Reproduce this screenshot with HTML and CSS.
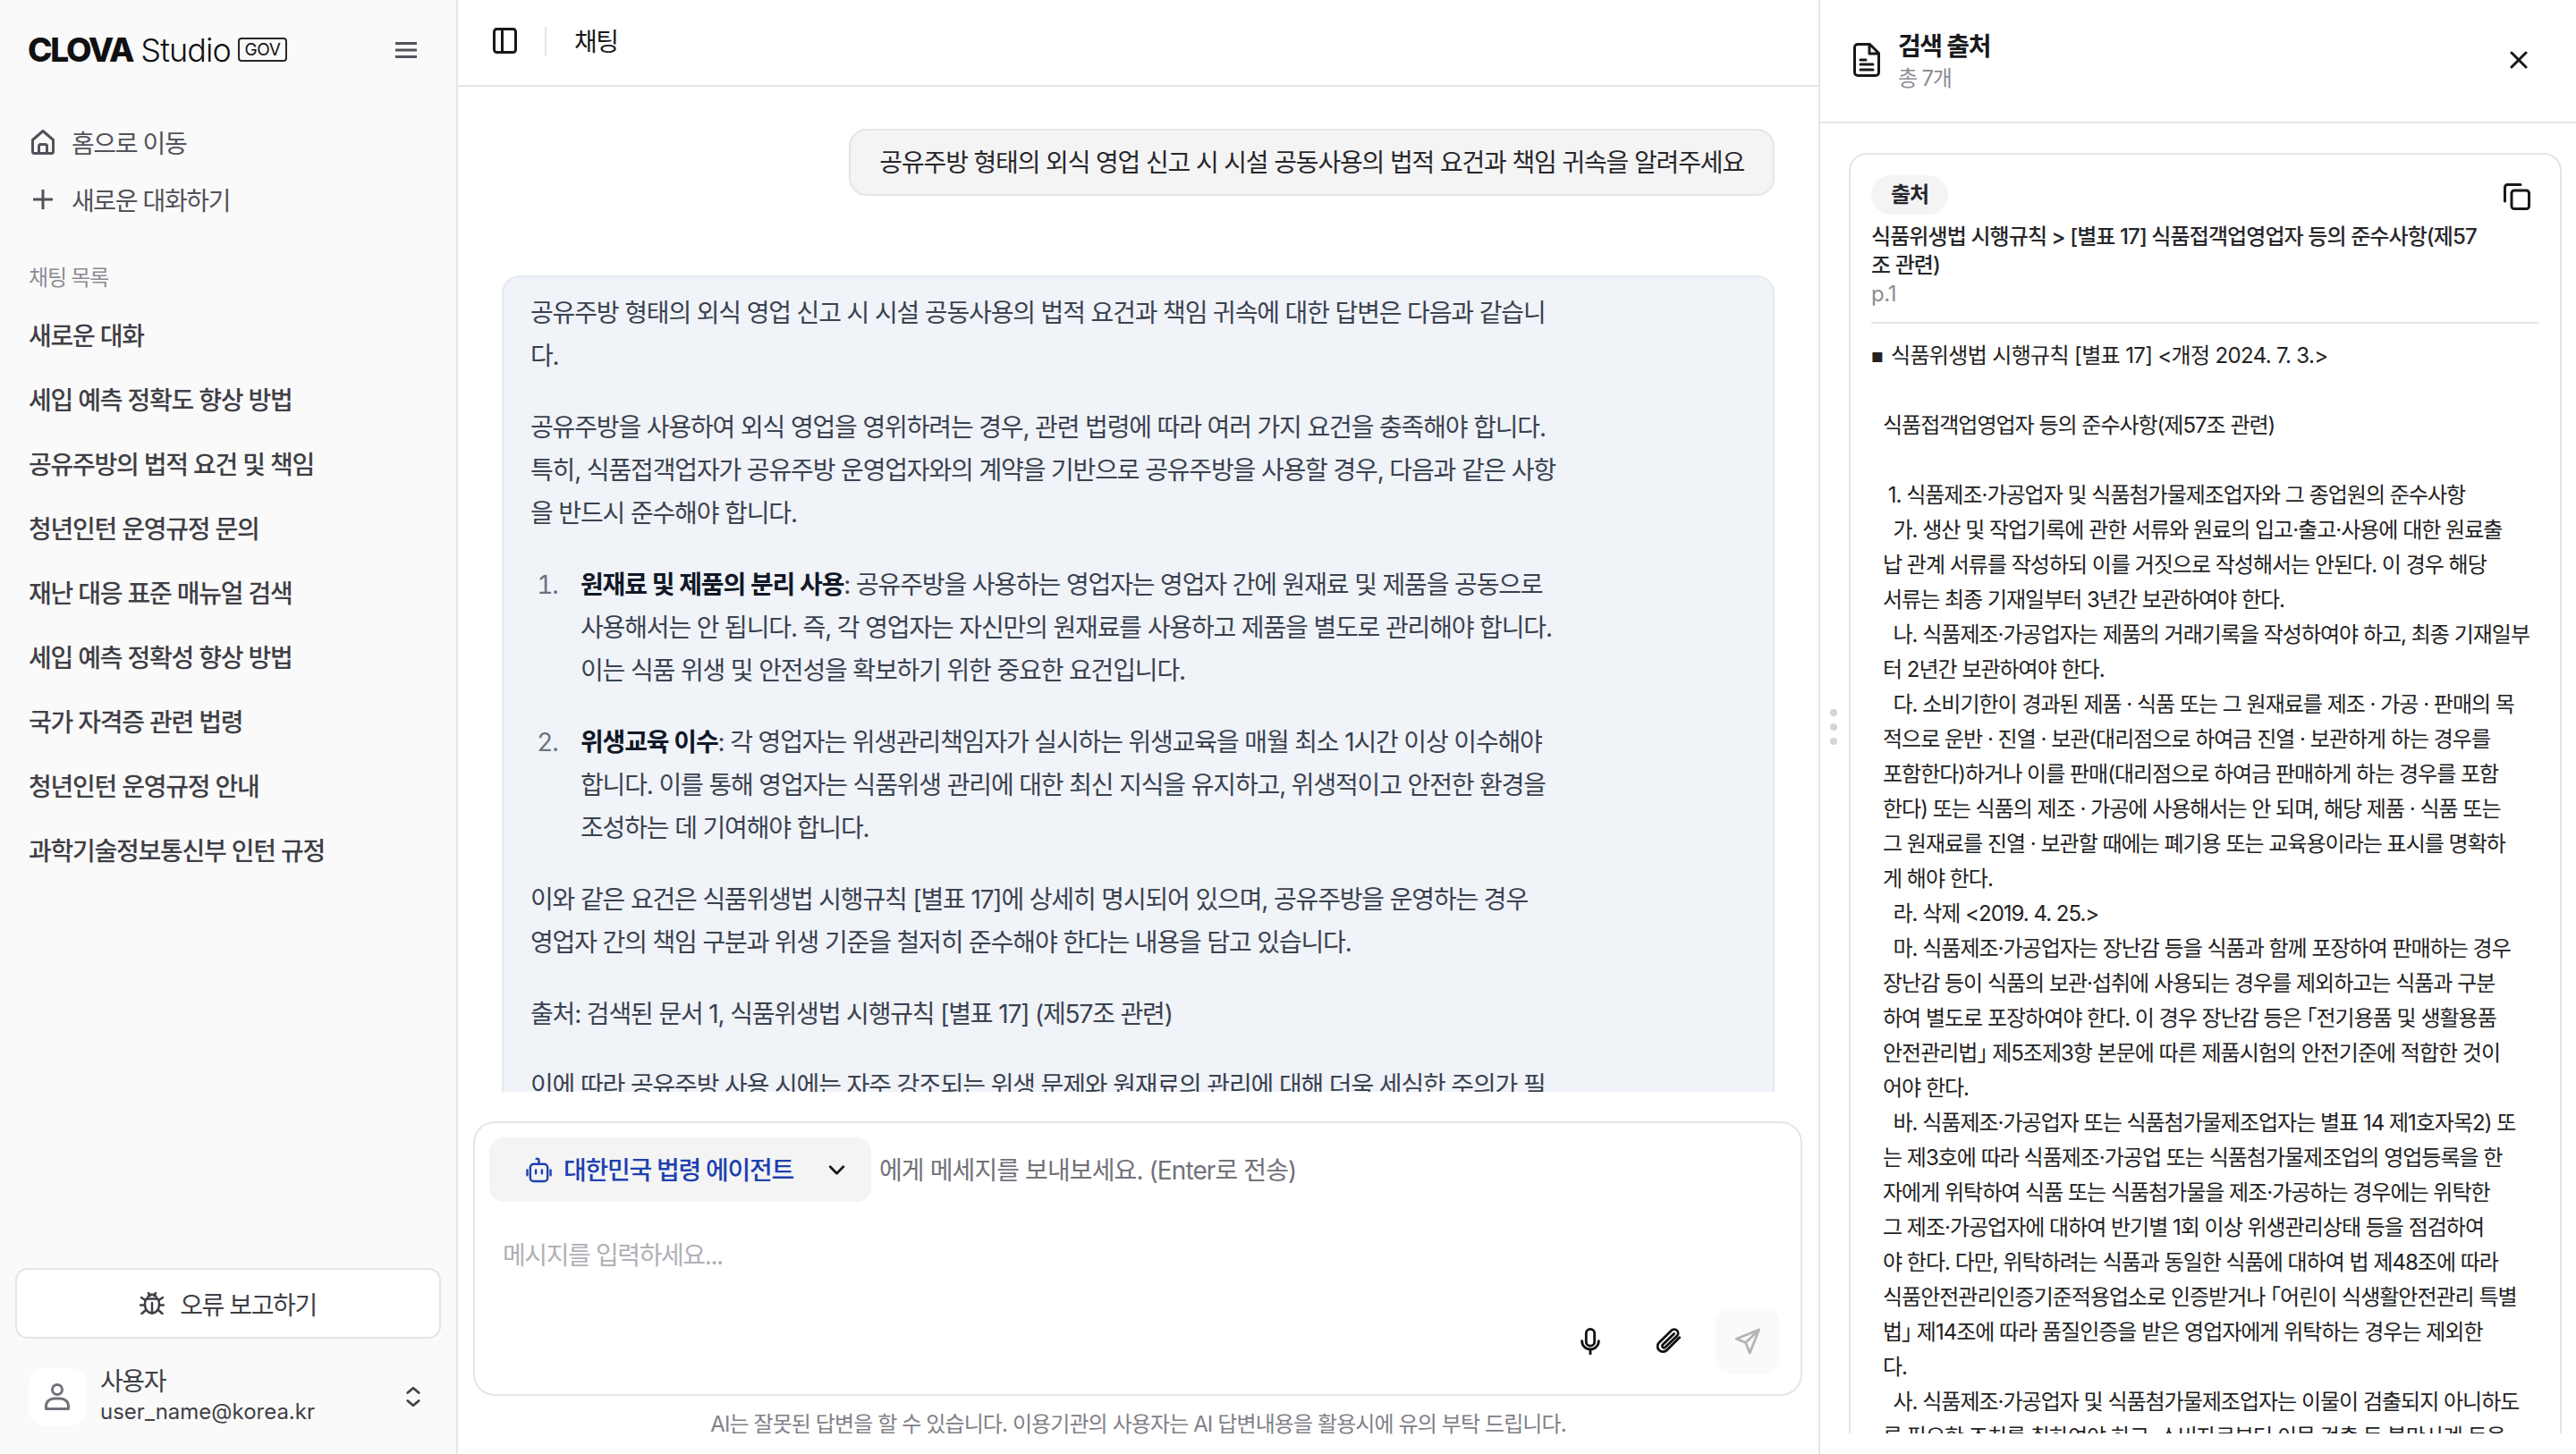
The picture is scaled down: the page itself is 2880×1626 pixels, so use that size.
FILE: index.html
```html
<!DOCTYPE html>
<html lang="ko">
<head>
    <meta charset="UTF-8">
    <title>CLOVA Studio GOV - 채팅</title>
    <link rel="stylesheet" href="styles.css">
</head>
<body>
    <div class="app">
        <aside class="sidebar">
            <div class="brand">
                <span class="brand-clova">CLOVA</span>
                <span class="brand-studio">Studio</span>
                <span class="brand-gov">GOV</span>
                <svg class="brand-menu" viewBox="0 0 24 18"><path d="M0 1.5h24M0 9h24M0 16.5h24"/></svg>
            </div>

            <nav class="nav">
                <a class="nav-link">
                    <span class="nav-icon">
                        <svg viewBox="0 0 26 28"><path d="M1.5 11.5 13 1.5l11.500 10v13a2 2 0 0 1-2 2h-19a2 2 0 0 1-2-2z"/><path d="M8.500 26.500v-8a2 2 0 0 1 2-2h5a2 2 0 0 1 2 2v8"/></svg>
                    </span>
                    홈으로 이동
                </a>
                <a class="nav-link">
                    <span class="nav-icon">
                        <svg viewBox="0 0 22 22"><path d="M11 0v22M0 11h22"/></svg>
                    </span>
                    새로운 대화하기
                </a>
            </nav>

            <div class="list-label">채팅 목록</div>
            <ul class="chat-list">
                <li>새로운 대화</li>
                <li>세입 예측 정확도 향상 방법</li>
                <li>공유주방의 법적 요건 및 책임</li>
                <li>청년인턴 운영규정 문의</li>
                <li>재난 대응 표준 매뉴얼 검색</li>
                <li>세입 예측 정확성 향상 방법</li>
                <li>국가 자격증 관련 법령</li>
                <li>청년인턴 운영규정 안내</li>
                <li>과학기술정보통신부 인턴 규정</li>
            </ul>

            <div class="sidebar-foot">
                <button class="report-btn">
                    <svg viewBox="0 0 28 28"><path d="M9 8.500a5 5 0 0 1 10 0"/><path d="M7.500 8.500h13c1 1.500 1.500 3.500 1.500 6 0 5.500-3 10-8 10s-8-4.500-8-10c0-2.500.5-4.500 1.500-6z"/><path d="M14 13v11.500M10 2l2 3M18 2l-2 3M6.500 10 2 7M21.500 10 26 7M5.500 15.500H1M22.500 15.500H27M7 21l-4.500 4M21 21l4.500 4"/></svg>
                    오류 보고하기
                </button>
                <div class="user">
                    <div class="user-avatar">
                        <svg viewBox="0 0 28 30"><circle cx="14" cy="7" r="5.500"/><path d="M1.500 28.500v-3c0-5 4-8.500 9-8.500h7c5 0 9 3.500 9 8.500v3z"/></svg>
                    </div>
                    <div class="user-info">
                        <div class="user-name">사용자</div>
                        <div class="user-mail">user_name@korea.kr</div>
                    </div>
                    <svg class="user-toggle" viewBox="0 0 18 26"><path d="m2 8 7-6 7 6M2 18l7 6 7-6"/></svg>
                </div>
            </div>
        </aside>

        <main class="chat">
            <header class="chat-head">
                <svg class="panel-icon" viewBox="0 0 27 29"><rect x="1.500" y="1.500" width="24" height="26" rx="3"/><path d="M10.500 1.500v26"/></svg>
                <span class="chat-title">채팅</span>
            </header>

            <div class="messages">
                <div class="msg-user">공유주방 형태의 외식 영업 신고 시 시설 공동사용의 법적 요건과 책임 귀속을 알려주세요</div>
                <div class="msg-bot">
                    <p>공유주방 형태의 외식 영업 신고 시 시설 공동사용의 법적 요건과 책임 귀속에 대한 답변은 다음과 같습니<br>다.</p>
                    <p>공유주방을 사용하여 외식 영업을 영위하려는 경우, 관련 법령에 따라 여러 가지 요건을 충족해야 합니다.<br>특히, 식품접객업자가 공유주방 운영업자와의 계약을 기반으로 공유주방을 사용할 경우, 다음과 같은 사항<br>을 반드시 준수해야 합니다.</p>
                    <ol>
                        <li><strong>원재료 및 제품의 분리 사용</strong>: 공유주방을 사용하는 영업자는 영업자 간에 원재료 및 제품을 공동으로<br>사용해서는 안 됩니다. 즉, 각 영업자는 자신만의 원재료를 사용하고 제품을 별도로 관리해야 합니다.<br>이는 식품 위생 및 안전성을 확보하기 위한 중요한 요건입니다.</li>
                        <li><strong>위생교육 이수</strong>: 각 영업자는 위생관리책임자가 실시하는 위생교육을 매월 최소 1시간 이상 이수해야<br>합니다. 이를 통해 영업자는 식품위생 관리에 대한 최신 지식을 유지하고, 위생적이고 안전한 환경을<br>조성하는 데 기여해야 합니다.</li>
                    </ol>
                    <p>이와 같은 요건은 식품위생법 시행규칙 [별표 17]에 상세히 명시되어 있으며, 공유주방을 운영하는 경우<br>영업자 간의 책임 구분과 위생 기준을 철저히 준수해야 한다는 내용을 담고 있습니다.</p>
                    <p>출처: 검색된 문서 1, 식품위생법 시행규칙 [별표 17] (제57조 관련)</p>
                    <p>이에 따라 공유주방 사용 시에는 자주 강조되는 위생 문제와 원재료의 관리에 대해 더욱 세심한 주의가 필<br>요합니다.</p>
                </div>
            </div>

            <div class="composer">
                <div class="composer-top">
                    <button class="agent-btn">
                        <svg class="agent-icon" viewBox="0 0 30 30"><path d="M15 8V3.500a2 2 0 0 0-3-1.500"/><rect x="5" y="8" width="20" height="20" rx="4"/><path d="M11.500 15v4M18.500 15v4M1.500 15v6M28.500 15v6"/></svg>
                        <span class="agent-name">대한민국 법령 에이전트</span>
                        <svg class="agent-chevron" viewBox="0 0 20 12"><path d="m2 2 8 8 8-8"/></svg>
                    </button>
                    <span class="agent-hint">에게 메세지를 보내보세요. (Enter로 전송)</span>
                </div>
                <div class="composer-input">메시지를 입력하세요...</div>
                <div class="composer-tools">
                    <button class="tool-btn">
                        <svg viewBox="0 0 24 32"><rect x="7" y="1.500" width="10" height="20" rx="5"/><path d="M2 15.500a10 10 0 0 0 20 0M12 25.500v5.500"/></svg>
                    </button>
                    <button class="tool-btn">
                        <svg viewBox="0 0 30 32"><path d="M27.500 11.500 12.500 26.500a6.500 6.500 0 0 1-9.500-9L18 3a4.500 4.500 0 0 1 6.500 6.500L10.500 23a2 2 0 0 1-3-3L21 7"/></svg>
                    </button>
                    <button class="tool-btn send-btn">
                        <svg viewBox="0 0 30 32"><path d="M28.500 2 1.500 13l11 4.500 5 12.500zM28.500 2l-16 15.500"/></svg>
                    </button>
                </div>
            </div>
            <div class="chat-note">AI는 잘못된 답변을 할 수 있습니다. 이용기관의 사용자는 AI 답변내용을 활용시에 유의 부탁 드립니다.</div>
        </main>

        <section class="sources">
            <div class="drag-handle"><i></i><i></i><i></i></div>
            <header class="sources-head">
                <svg class="sources-icon" viewBox="0 0 30 38"><path d="M18.500 1.500H5a3.500 3.500 0 0 0-3.500 3.500v28A3.500 3.500 0 0 0 5 36.500h20a3.500 3.500 0 0 0 3.500-3.500V11.500zM18 2v10h10M8 19h6M8 24h14M8 30h14"/></svg>
                <div class="sources-title">
                    <div class="sources-name">검색 출처</div>
                    <div class="sources-count">총 7개</div>
                </div>
                <svg class="sources-close" viewBox="0 0 20 20"><path d="m2 2 16 16M18 2 2 18"/></svg>
            </header>
            <div class="sources-body">
                <article class="source-card">
                    <div class="source-top">
                        <span class="source-chip">출처</span>
                        <svg class="source-copy" viewBox="0 0 30 30"><path d="M1.500 20V4.500a3 3 0 0 1 3-3H19"/><rect x="9" y="8" width="19.500" height="20.500" rx="3"/></svg>
                    </div>
                    <div class="source-title">식품위생법 시행규칙 &gt; [별표 17] 식품접객업영업자 등의 준수사항(제57<br>조 관련)</div>
                    <div class="source-page">p.1</div>
                    <div class="source-text"><div class="source-first"><span class="bullet">■</span>식품위생법 시행규칙 [별표 17] &lt;개정 2024. 7. 3.&gt;</div>
<pre class="source-pre">

식품접객업영업자 등의 준수사항(제57조 관련)

 1. 식품제조·가공업자 및 식품첨가물제조업자와 그 종업원의 준수사항
  가. 생산 및 작업기록에 관한 서류와 원료의 입고·출고·사용에 대한 원료출
납 관계 서류를 작성하되 이를 거짓으로 작성해서는 안된다. 이 경우 해당
서류는 최종 기재일부터 3년간 보관하여야 한다.
  나. 식품제조·가공업자는 제품의 거래기록을 작성하여야 하고, 최종 기재일부
터 2년간 보관하여야 한다.
  다. 소비기한이 경과된 제품 · 식품 또는 그 원재료를 제조 · 가공 · 판매의 목
적으로 운반 · 진열 · 보관(대리점으로 하여금 진열 · 보관하게 하는 경우를
포함한다)하거나 이를 판매(대리점으로 하여금 판매하게 하는 경우를 포함
한다) 또는 식품의 제조 · 가공에 사용해서는 안 되며, 해당 제품 · 식품 또는
그 원재료를 진열 · 보관할 때에는 폐기용 또는 교육용이라는 표시를 명확하
게 해야 한다.
  라. 삭제 &lt;2019. 4. 25.&gt;
  마. 식품제조·가공업자는 장난감 등을 식품과 함께 포장하여 판매하는 경우
장난감 등이 식품의 보관·섭취에 사용되는 경우를 제외하고는 식품과 구분
하여 별도로 포장하여야 한다. 이 경우 장난감 등은 「전기용품 및 생활용품
안전관리법」 제5조제3항 본문에 따른 제품시험의 안전기준에 적합한 것이
어야 한다.
  바. 식품제조·가공업자 또는 식품첨가물제조업자는 별표 14 제1호자목2) 또
는 제3호에 따라 식품제조·가공업 또는 식품첨가물제조업의 영업등록을 한
자에게 위탁하여 식품 또는 식품첨가물을 제조·가공하는 경우에는 위탁한
그 제조·가공업자에 대하여 반기별 1회 이상 위생관리상태 등을 점검하여
야 한다. 다만, 위탁하려는 식품과 동일한 식품에 대하여 법 제48조에 따라
식품안전관리인증기준적용업소로 인증받거나 「어린이 식생활안전관리 특별
법」 제14조에 따라 품질인증을 받은 영업자에게 위탁하는 경우는 제외한
다.
  사. 식품제조·가공업자 및 식품첨가물제조업자는 이물이 검출되지 아니하도
록 필요한 조치를 취하여야 하고, 소비자로부터 이물 검출 등 불만사례 등을
신고받은 경우 그 내용을 기록하여 2년간 보관하여야 한다.</pre></div>
                </article>
            </div>
        </section>
    </div>
</body>
</html>
```
FILE: styles.css
```css
* {
    box-sizing: border-box;
}

body {
    margin: 0;
    height: 100vh;
    overflow: hidden;
    background: #fff;
    color: #3f3f46;
    font-family: 'Inter', 'Noto Sans CJK KR', sans-serif;
    font-size: 28px;
    letter-spacing: -1.4px;
}

button {
    font: inherit;
    letter-spacing: inherit;
    color: inherit;
    border: none;
    background: none;
    padding: 0;
}

svg {
    display: block;
    fill: none;
    stroke: currentColor;
    stroke-width: 3;
    stroke-linecap: round;
    stroke-linejoin: round;
}

.app {
    display: grid;
    grid-template-columns: 512px 1523px 1fr;
    height: 100%;
}

/* sidebar */
.sidebar {
    display: flex;
    flex-direction: column;
    min-height: 0;
    background: #fafafa;
    border-right: 2px solid #e5e5e5;
}

.brand {
    display: flex;
    align-items: center;
    height: 27px;
    margin: 42px 44px 58px 31px;
    color: #111;
    letter-spacing: 0;
}

.brand-clova {
    font-size: 37px;
    font-weight: 800;
    letter-spacing: -2.2px;
}

.brand-studio {
    margin-left: 9px;
    font-size: 36px;
    font-weight: 300;
    letter-spacing: -0.9px;
}

.brand-gov {
    display: flex;
    align-items: center;
    justify-content: center;
    width: 55px;
    height: 27px;
    margin-left: 8px;
    border: 2px solid #27272a;
    border-radius: 4px;
    font-size: 19px;
    letter-spacing: -0.4px;
}

.brand-menu {
    width: 24px;
    height: 18px;
    margin-left: auto;
    color: #52525b;
}

.nav-link {
    display: flex;
    align-items: center;
    gap: 16px;
    height: 64px;
    padding-left: 32px;
    color: #52525b;
}

.nav-icon {
    display: flex;
    justify-content: center;
    width: 32px;
}

.nav-icon svg {
    width: 26px;
    height: 28px;
}

.nav-link:last-child svg {
    width: 22px;
    height: 22px;
}

.list-label {
    margin: 38px 0 11px 32px;
    font-size: 24px;
    line-height: 36px;
    color: #8c8c94;
    letter-spacing: -1.2px;
}

.chat-list {
    margin: 0;
    padding: 0 0 0 32px;
    list-style: none;
    font-weight: 500;
    letter-spacing: -1.25px;
}

.chat-list li {
    height: 72px;
    line-height: 72px;
}

.sidebar-foot {
    margin-top: auto;
    padding: 0 17px 32px;
}

.report-btn {
    display: flex;
    align-items: center;
    justify-content: center;
    gap: 17px;
    width: 100%;
    height: 79px;
    background: #fff;
    border: 2px solid #e5e5e5;
    border-radius: 14px;
}

.report-btn svg {
    width: 28px;
    height: 28px;
    stroke-width: 2.5;
}

.user {
    display: flex;
    align-items: center;
    height: 64px;
    margin-top: 33px;
    padding: 0 23px 0 15px;
}

.user-avatar {
    display: flex;
    align-items: center;
    justify-content: center;
    width: 64px;
    height: 64px;
    background: #fff;
    border-radius: 16px;
    color: #71717a;
}

.user-avatar svg {
    width: 28px;
    height: 30px;
}

.user-info {
    margin-left: 16px;
}

.user-name {
    line-height: 34px;
}

.user-mail {
    font-size: 24px;
    line-height: 34px;
    letter-spacing: 0;
}

.user-toggle {
    width: 16px;
    height: 24px;
    margin-left: auto;
}

/* chat */
.chat {
    display: flex;
    flex-direction: column;
    min-width: 0;
    min-height: 0;
    border-right: 2px solid #e5e5e5;
}

.chat-head {
    display: flex;
    align-items: center;
    flex-shrink: 0;
    height: 97px;
    padding: 0 0 4px 39px;
    border-bottom: 2px solid #e5e5e5;
    color: #18181b;
}

.panel-icon {
    width: 27px;
    height: 29px;
}

.chat-title {
    margin-left: 31px;
    padding: 0 0 2px 31px;
    height: 32px;
    line-height: 34px;
    border-left: 2px solid #e5e5e5;
}

.messages {
    flex: 1;
    min-height: 0;
    overflow: hidden;
    padding: 47px 49px 0;
    font-size: 28px;
    line-height: 48px;
    letter-spacing: -1.15px;
}

.msg-user {
    width: fit-content;
    height: 75px;
    margin-left: auto;
    padding: 12px 32px;
    color: #27272a;
    background: #f4f4f5;
    border: 2px solid #e5e5e5;
    border-radius: 20px;
    white-space: nowrap;
}

.msg-bot {
    margin-top: 89px;
    padding: 16px 32px 32px 30px;
    color: #3a4250;
    background: #f0f3f8;
    border: 2px solid #e4e9f0;
    border-radius: 20px;
    white-space: nowrap;
}

.msg-bot p {
    margin: 0 0 32px;
}

.msg-bot ol {
    margin: 0 0 32px;
    padding-left: 56px;
}

.msg-bot li {
    margin-bottom: 32px;
}

.msg-bot li:last-child {
    margin-bottom: 0;
}

.msg-bot li::marker {
    content: counter(list-item) ".    ";
    color: #6b7280;
}

.msg-bot strong {
    font-weight: 600;
    color: #111827;
}

.composer {
    display: flex;
    flex-direction: column;
    flex-shrink: 0;
    height: 307px;
    margin: 33px 18px 0 17px;
    padding: 16px 23px 23px 16px;
    background: #fff;
    border: 2px solid #e5e5e5;
    border-radius: 24px;
}

.composer-top {
    display: flex;
    align-items: center;
    gap: 9px;
}

.agent-btn {
    display: flex;
    align-items: center;
    width: 427px;
    height: 72px;
    padding-left: 41px;
    background: #f4f4f5;
    border-radius: 16px;
    color: #1e40af;
    font-weight: 500;
}

.agent-icon {
    width: 29px;
    height: 29px;
    stroke-width: 2.500;
}

.agent-name {
    margin-left: 13px;
    padding-bottom: 2px;
    letter-spacing: -1.3px;
}

.agent-chevron {
    width: 19px;
    height: 11px;
    margin-left: 39px;
    color: #18181b;
}

.agent-hint {
    padding-bottom: 2px;
    color: #71717a;
    letter-spacing: -0.9px;
}

.composer-input {
    margin-top: 32px;
    padding-left: 15px;
    line-height: 56px;
    color: #b0b0b6;
}

.composer-tools {
    display: flex;
    justify-content: flex-end;
    gap: 16px;
    margin-top: auto;
}

.tool-btn {
    display: flex;
    align-items: center;
    justify-content: center;
    width: 72px;
    height: 72px;
    border-radius: 16px;
    color: #111;
}

.tool-btn svg {
    width: 28px;
    height: 30px;
}

.send-btn {
    background: #fafafa;
    color: #b4b4b8;
}

.chat-note {
    flex-shrink: 0;
    height: 65px;
    line-height: 64px;
    text-align: center;
    font-size: 24px;
    letter-spacing: -0.9px;
    color: #808087;
}

/* right panel */
.sources {
    position: relative;
    display: flex;
    flex-direction: column;
    min-height: 0;
}

.drag-handle {
    position: absolute;
    left: 11px;
    top: 793px;
    display: flex;
    flex-direction: column;
    gap: 8px;
}

.drag-handle i {
    width: 8px;
    height: 8px;
    border-radius: 50%;
    background: #d4d4d8;
}

.sources-head {
    display: flex;
    align-items: center;
    flex-shrink: 0;
    height: 138px;
    padding: 0 54px 2px 37px;
    border-bottom: 2px solid #e5e5e5;
}

.sources-icon {
    width: 30px;
    height: 38px;
    color: #18181b;
}

.sources-title {
    margin: 5px 0 0 20px;
}

.sources-name {
    line-height: 36px;
    font-weight: 600;
    color: #18181b;
}

.sources-count {
    line-height: 36px;
    font-size: 24px;
    letter-spacing: -1.200px;
    color: #8c8c94;
}

.sources-close {
    width: 20px;
    height: 20px;
    margin-left: auto;
    color: #18181b;
}

.sources-body {
    height: 1465px;
    padding: 33px 16px 0 32px;
    overflow: hidden;
}

.source-card {
    padding: 23px 23px 0;
    background: #fff;
    border: 2px solid #e5e5e5;
    border-radius: 20px;
    font-size: 24px;
    letter-spacing: -1px;
}

.source-top {
    display: flex;
    justify-content: space-between;
    height: 44px;
}

.source-chip {
    width: 86px;
    line-height: 44px;
    text-align: center;
    font-weight: 600;
    background: #f4f4f5;
    border-radius: 22px;
    color: #27272a;
}

.source-copy {
    width: 30px;
    height: 30px;
    margin: 9px 10px 0 0;
    color: #18181b;
}

.source-title {
    margin-top: 9px;
    line-height: 32px;
    font-weight: 500;
    letter-spacing: -0.9px;
    color: #27272a;
}

.source-page {
    line-height: 32px;
    color: #8c8c94;
    letter-spacing: -0.4px;
}

.source-text {
    margin-top: 15px;
    padding-top: 16px;
    border-top: 2px solid #e5e5e5;
    line-height: 39px;
    color: #222;
}

.source-first {
    letter-spacing: -0.65px;
}

.bullet {
    display: inline-block;
    width: 22px;
    font-size: 15px;
    vertical-align: 1px;
}

.source-pre {
    margin: -2px 0 0;
    padding-left: 13px;
    font: inherit;
    font-feature-settings: "halt";
    letter-spacing: inherit;
    line-height: 39px;
}
```
